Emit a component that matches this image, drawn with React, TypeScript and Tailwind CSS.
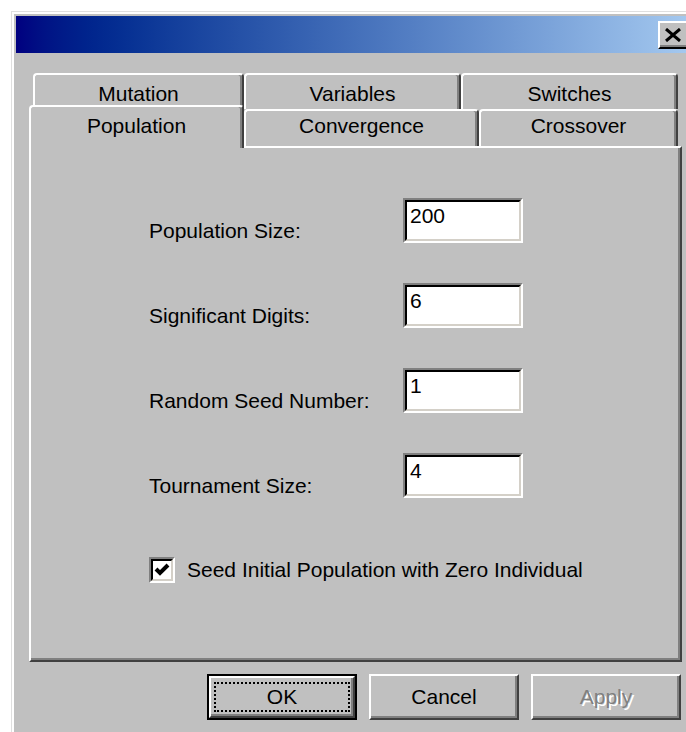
import React from "react";

const font = "font-['Liberation_Sans',Arial,sans-serif]";

function Tab({
  label,
  width,
  height,
  padTop,
  selected = false,
}: {
  label: string;
  width: string;
  height: string;
  padTop: string;
  selected?: boolean;
}) {
  return (
    <div
      className={`${width} ${height} ${padTop} ${
        selected ? "relative z-10 mb-[-2px]" : ""
      } shrink-0 bg-[#c0c0c0] border-t-2 border-l-2 border-r-2 border-t-white border-l-white border-r-[#404040] rounded-t-[4px] shadow-[inset_-2px_0_0_#808080] text-center leading-[24px]`}
    >
      {label}
    </div>
  );
}

function Field({ label, value }: { label: string; value: string }) {
  return (
    <div className="flex items-end">
      <div className="w-[254px] leading-[24px]">{label}</div>
      <div className="w-[120px] h-[45px] bg-white border-2 border-t-[#808080] border-l-[#808080] border-b-white border-r-white">
        <div className="h-full border-2 border-t-black border-l-black border-b-[#d4d0c8] border-r-[#d4d0c8] pl-[3px] pt-[2px] leading-[24px]">
          {value}
        </div>
      </div>
    </div>
  );
}

function Button({
  label,
  isDefault = false,
  disabled = false,
}: {
  label: string;
  isDefault?: boolean;
  disabled?: boolean;
}) {
  const inner = (
    <div className="h-full w-full flex border-2 border-t-white border-l-white border-b-[#404040] border-r-[#404040] shadow-[inset_-2px_-2px_0_#808080]">
      {isDefault ? (
        <div className="flex-1 mt-[4px] ml-[3px] mr-[3px] mb-[4px] border-2 border-dotted border-black flex items-center justify-center leading-[24px]">
          {label}
        </div>
      ) : (
        <div
          className={`flex-1 flex items-center justify-center leading-[24px] ${
            disabled ? "text-[#808080] [text-shadow:2px_2px_0_#ffffff]" : ""
          }`}
        >
          {label}
        </div>
      )}
    </div>
  );
  return isDefault ? (
    <div className="w-[150px] h-[46px] border-2 border-black">{inner}</div>
  ) : (
    <div className="w-[150px] h-[46px]">{inner}</div>
  );
}

export default function App() {
  return (
    <div
      className={`w-[686px] h-[732px] overflow-hidden bg-white pl-[11px] pt-[11px] ${font} text-[21px] text-black`}
    >
      {/* Window frame */}
      <div className="w-[700px] h-[760px] border-l border-t border-[#dfdfdf] bg-[#c0c0c0]">
        <div className="h-full border-l-2 border-t-2 border-white p-[2px]">
          {/* Caption bar */}
          <div className="w-[678px] h-[37px] flex items-center justify-end bg-linear-to-r from-[#000080] to-[#a6caf0]">
            <div className="mr-[4px] w-[32px] h-[28px] bg-[#c0c0c0] border-2 border-t-white border-l-white border-b-black border-r-black shadow-[inset_-2px_-2px_0_#808080] flex items-center justify-center">
              <svg width="18" height="14" viewBox="0 0 18 14" className="mr-[2px]">
                <path d="M2 1 L16 13 M16 1 L2 13" stroke="#000" strokeWidth="3" />
              </svg>
            </div>
          </div>

          {/* Dialog body */}
          <div className="pl-[13px] pt-[20px]">
            {/* Tab strip */}
            <div className="w-[653px]">
              <div className="flex ml-[4px] h-[36px]">
                <Tab label="Mutation" width="w-[211px]" height="h-[36px]" padTop="pt-[7px]" />
                <Tab label="Variables" width="w-[217px]" height="h-[36px]" padTop="pt-[7px]" />
                <Tab label="Switches" width="w-[217px]" height="h-[36px]" padTop="pt-[7px]" />
              </div>
              <div className="relative flex items-end h-[41px] mt-[-4px]">
                <Tab label="Population" width="w-[215px]" height="h-[43px]" padTop="pt-[7px]" selected />
                <Tab label="Convergence" width="w-[235px]" height="h-[37px]" padTop="pt-[3px]" />
                <Tab label="Crossover" width="w-[199px]" height="h-[37px]" padTop="pt-[3px]" />
              </div>
            </div>

            {/* Tab page */}
            <div className="w-[653px] h-[516px] border-2 border-t-white border-l-white border-r-[#404040] border-b-[#404040] shadow-[inset_-2px_-2px_0_#808080] pl-[118px] pt-[50px]">
              <div className="flex flex-col gap-[40px]">
                <Field label="Population Size:" value="200" />
                <Field label="Significant Digits:" value="6" />
                <Field label="Random Seed Number:" value="1" />
                <Field label="Tournament Size:" value="4" />
              </div>
              <div className="flex items-center mt-[59px]">
                <div className="w-[26px] h-[26px] bg-white border-2 border-t-[#808080] border-l-[#808080] border-b-white border-r-white">
                  <div className="h-full border-2 border-t-black border-l-black border-b-[#d4d0c8] border-r-[#d4d0c8]">
                    <svg width="18" height="18" viewBox="0 0 18 18">
                      <polyline
                        points="3,8 7,12 15,4"
                        fill="none"
                        stroke="#000"
                        strokeWidth="4"
                        strokeLinejoin="miter"
                      />
                    </svg>
                  </div>
                </div>
                <div className="ml-[12px] leading-[24px]">
                  Seed Initial Population with Zero Individual
                </div>
              </div>
            </div>

            {/* Dialog buttons */}
            <div className="w-[653px] mt-[12px] flex justify-end gap-[12px] pr-[1px]">
              <Button label="OK" isDefault />
              <Button label="Cancel" />
              <Button label="Apply" disabled />
            </div>
          </div>
        </div>
      </div>
    </div>
  );
}
